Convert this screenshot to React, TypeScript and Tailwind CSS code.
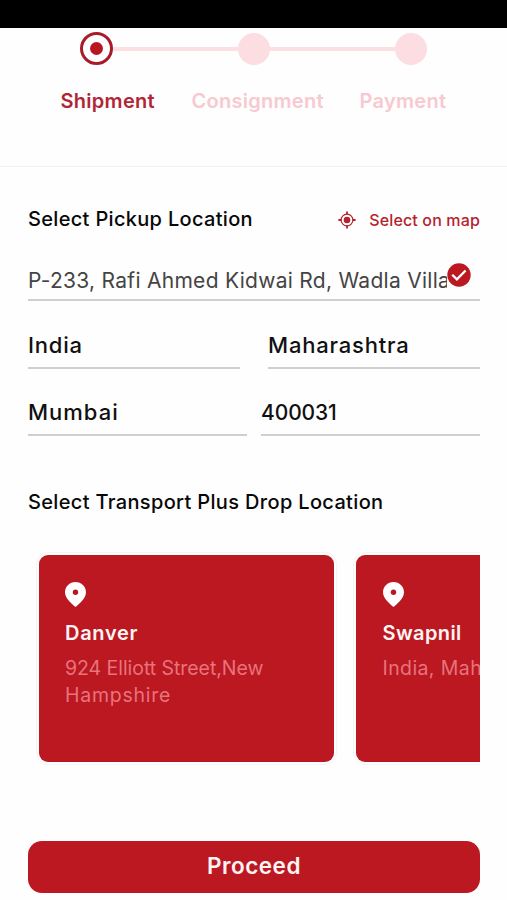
import React from 'react';
import clsx from 'clsx';

interface DropLocation {
  name: string;
  nameClass: string;
  lines: { text: string; className: string }[];
}

const dropLocations: DropLocation[] = [
  {
    name: 'Danver',
    nameClass: 'tracking-[0.7px]',
    lines: [
      { text: '924 Elliott Street,New', className: 'tracking-[-0.05px]' },
      { text: 'Hampshire', className: 'tracking-[0.75px]' },
    ],
  },
  {
    name: 'Swapnil',
    nameClass: 'tracking-[0.4px]',
    lines: [{ text: 'India, Maharashtra', className: 'tracking-[0.4px]' }],
  },
];

function Stepper() {
  return (
    <div className="h-[139px] border-b border-[#f0f0f0]">
      <div className="flex items-center pl-20 pt-1">
        <div className="flex size-[33px] items-center justify-center rounded-full border-3 border-[#a81c2a]">
          <div className="size-[13px] rounded-full bg-[#b81722]" />
        </div>
        <div className="h-1 w-[125px] bg-[#fcdfe3]" />
        <div className="size-8 rounded-full bg-[#fcdde1]" />
        <div className="h-1 w-[125px] bg-[#fcdfe3]" />
        <div className="size-8 rounded-full bg-[#fcdde1]" />
      </div>
      <div className="flex pl-[60.5px] pt-[21px] text-[20px] font-semibold leading-[30px] tracking-[0.28px] text-[#f7c9d0]">
        <span className="w-[131px] text-[#b02636]">Shipment</span>
        <span className="w-[168px]">Consignment</span>
        <span>Payment</span>
      </div>
    </div>
  );
}

function TargetIcon() {
  return (
    <svg className="size-[18px]" viewBox="0 0 18 18" fill="none" stroke="#b5222f">
      <circle cx="9" cy="9" r="5.9" strokeWidth="1.2" />
      <circle cx="9" cy="9" r="3.3" fill="#b5222f" stroke="none" />
      <path d="M9 .4v3M9 14.6v3M.4 9h3M14.6 9h3" strokeWidth="1.8" />
    </svg>
  );
}

function CheckIcon() {
  return (
    <svg className="size-[24px] shrink-0" viewBox="0 0 23 23" fill="none">
      <circle cx="11.5" cy="11.5" r="11.2" fill="#bb1822" />
      <path d="M5 11.3l4.5 4.3 8.3-8.4" stroke="#fff" strokeWidth="2.2" />
    </svg>
  );
}

function PinIcon() {
  return (
    <svg className="h-[25px] w-[21px]" viewBox="0 0 21 25">
      <path
        d="M10.5 0C4.7 0 0 4.6 0 10.3c0 3.4 1.9 6.3 4.3 9C6.2 21.5 8.4 23.5 10.5 25c2.1-1.5 4.3-3.5 6.2-5.7 2.4-2.7 4.3-5.6 4.3-9C21 4.6 16.3 0 10.5 0z"
        fill="#fff"
      />
      <circle cx="10.5" cy="10.2" r="2.7" fill="#b81722" />
    </svg>
  );
}

function Field({ value, className }: { value: string; className?: string }) {
  return (
    <div className={clsx('h-[45px] border-b-2 border-[#cfcfcf] font-medium leading-[43px] text-[#111]', className)}>
      {value}
    </div>
  );
}

function LocationCard({ name, nameClass, lines }: DropLocation) {
  return (
    <div className="h-[207px] w-[295.5px] shrink-0 rounded-[9px] bg-[#bb1822] px-[26.5px] pt-[27px] outline-1 outline-offset-2 outline-[#faf3f4]">
      <PinIcon />
      <h3 className={clsx('mt-3 text-[20px] font-semibold leading-7 text-[#fff4f4]', nameClass)}>{name}</h3>
      <p className="mt-2 whitespace-nowrap text-[19.5px] leading-[27px] text-[#e8737b]">
        {lines.map((line) => (
          <span key={line.text} className={clsx('block', line.className)}>
            {line.text}
          </span>
        ))}
      </p>
    </div>
  );
}

export default function App() {
  return (
    <div className="h-[900px] w-[507px] overflow-hidden bg-[#fefefe] font-['Inter',sans-serif]">
      <div className="h-7 bg-black" />
      <Stepper />

      <div className="pl-7 pr-[27px]">
        {/* Pickup */}
        <div className="flex items-center justify-between pt-[36px]">
          <h2 className="text-[20px] font-medium leading-[30px] tracking-[0.32px] text-[#080808]">
            Select Pickup Location
          </h2>
          <div className="flex items-center gap-[13px] pt-[2px]">
            <TargetIcon />
            <span className="text-[16px] font-medium leading-[30px] tracking-[0.15px] text-[#b5222f]">Select on map</span>
          </div>
        </div>
        <div className="mt-[21px] flex h-[45px] border-b-2 border-[#cfcfcf]">
          <div className="w-[419px] overflow-hidden whitespace-nowrap pt-[6px] text-[21px] leading-[37px] tracking-[0.28px] text-[#444]">
            P-233, Rafi Ahmed Kidwai Rd, Wadla Village
          </div>
          <div className="pt-[7px]">
            <CheckIcon />
          </div>
        </div>
        <div className="mt-[23px] flex justify-between">
          <Field value="India" className="w-[212px] text-[22px] tracking-[0.8px]" />
          <Field value="Maharashtra" className="w-[212px] text-[22px] tracking-[0.8px]" />
        </div>
        <div className="mt-[22px] flex justify-between">
          <Field value="Mumbai" className="w-[219px] text-[22px] tracking-[1px]" />
          <Field value="400031" className="w-[219px] text-[21px] tracking-[-0.1px]" />
        </div>

        {/* Drop */}
        <h2 className="mt-[51px] text-[20px] font-medium leading-[30px] tracking-[0.34px] text-[#080808]">
          Select Transport Plus Drop Location
        </h2>
        <div className="mt-[28px] flex h-[227px] gap-[22px] overflow-hidden pl-[10.5px] pt-[10px]">
          {dropLocations.map((location) => (
            <LocationCard key={location.name} {...location} />
          ))}
        </div>

        <button className="mt-[69px] h-[52px] w-full rounded-[14px] bg-[#bb1822] pb-[2px] text-[22.5px] font-semibold tracking-[0.5px] text-[#fff4f4]">
          Proceed
        </button>
      </div>
    </div>
  );
}
